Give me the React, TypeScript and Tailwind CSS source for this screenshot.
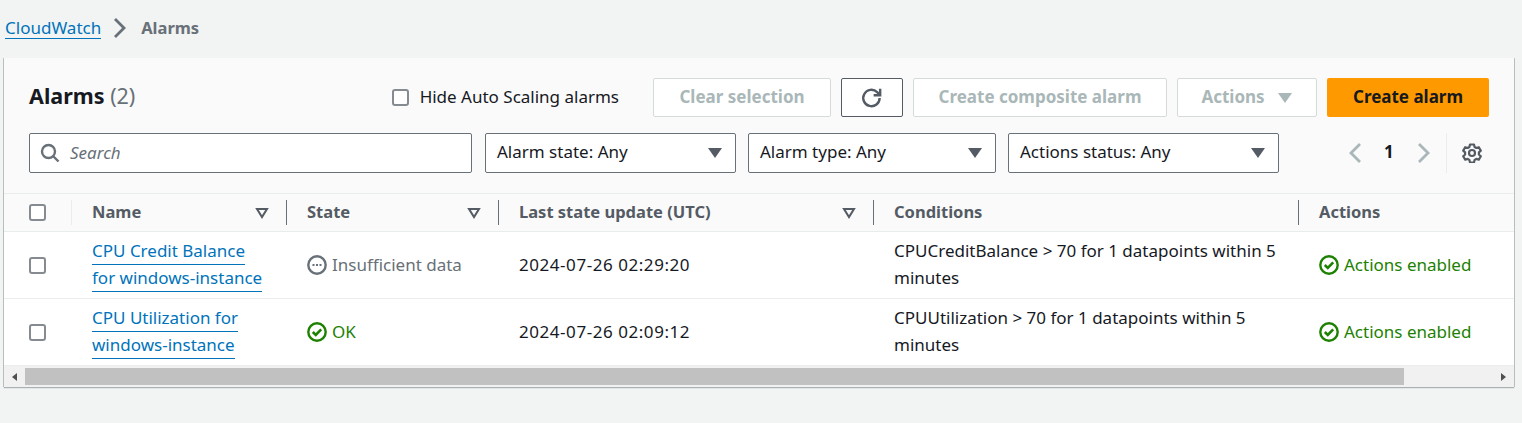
import React from "react";

const font = "font-['Noto_Sans',sans-serif]";

const Caret = ({ className = "fill-[#545b64]" }: { className?: string }) => (
  <svg width="16" height="12" viewBox="0 0 16 12" className={className}>
    <path d="M1 1h14L8 11z" />
  </svg>
);

const SortCaret = () => (
  <svg width="14" height="12" viewBox="0 0 14 12" fill="none" stroke="#545b64" strokeWidth="2">
    <path d="M2 2h10L7 10z" />
  </svg>
);

const CheckBox = () => <div className="h-[17px] w-[17px] rounded-[3px] border-2 border-[#858b91] bg-white" />;

const OkIcon = () => (
  <svg width="20" height="20" viewBox="0 0 20 20" fill="none" stroke="#1d8102" strokeWidth="2.4">
    <circle cx="10" cy="10" r="8.700" />
    <path d="M5.800 10l3 3 5.400-5.600" strokeWidth="2.600" />
  </svg>
);

const DotsIcon = () => (
  <svg width="20" height="20" viewBox="0 0 20 20" fill="none" stroke="#687078" strokeWidth="2.4">
    <circle cx="10" cy="10" r="8.700" />
    <path d="M5.500 10h2M9 10h2M12.500 10h2" strokeWidth="2.200" />
  </svg>
);

const Chevron = ({ dir, color }: { dir: "left" | "right"; color: string }) => (
  <svg width="14" height="22" viewBox="0 0 14 22" fill="none" stroke={color} strokeWidth="2.8">
    <path d={dir === "left" ? "M12 2L3 11l9 9" : "M2 2l9 9-9 9"} />
  </svg>
);

const Gear = () => (
  <svg width="20" height="20" viewBox="0 0 20 20" fill="none" stroke="#545b64" strokeWidth="2.200" strokeLinejoin="round">
    <path d="M8 1.500h4l.6 2.500 1.700 1 2.500-.8 2 3.400-1.900 1.800v2.100l1.900 1.800-2 3.400-2.500-.8-1.700 1-.6 2.600H8l-.6-2.600-1.700-1-2.500.8-2-3.400 1.900-1.800V9.400L1.200 7.600l2-3.400 2.500.8 1.700-1z" />
    <circle cx="10" cy="10" r="3" />
  </svg>
);

const FilterSelect = ({ label, width }: { label: string; width: string }) => (
  <div className={`flex h-[40px] items-center justify-between rounded-[2px] border border-[#687078] bg-white pl-[11px] pr-[12px] text-[#16191f] ${width}`}>
    <span className="-mt-[2px]">{label}</span>
    <Caret />
  </div>
);

const DisabledButton = ({ label, width, caret }: { label: string; width: string; caret?: boolean }) => (
  <div className={`flex h-[39px] items-center justify-center gap-[12px] rounded-[2px] border border-[#d5dbdb] bg-white font-bold text-[#aab7b8] ${width}`}>
    <span className="-mt-[2px]">{label}</span>
    {caret && <Caret className="fill-[#aab7b8]" />}
  </div>
);

const HeadCell = ({ label, sort, border = true }: { label: string; sort?: boolean; border?: boolean }) => (
  <div className="flex h-full items-center py-[6px]">
    <div className={`flex h-full w-full items-center justify-between pl-[20px] pr-[17px] ${border ? "border-r border-[#687078]" : ""}`}>
      <span>{label}</span>
      {sort && <SortCaret />}
    </div>
  </div>
);

const rows = [
  {
    name: ["CPU Credit Balance", "for windows-instance"],
    ok: false,
    state: "Insufficient data",
    updated: "2024-07-26 02:29:20",
    condition: "CPUCreditBalance > 70 for 1 datapoints within 5 minutes",
  },
  {
    name: ["CPU Utilization for", "windows-instance"],
    ok: true,
    state: "OK",
    updated: "2024-07-26 02:09:12",
    condition: "CPUUtilization > 70 for 1 datapoints within 5 minutes",
  },
];

const columns = "grid grid-cols-[68px_215px_212px_375px_425px_215px]";

export default function App() {
  return (
    <div className={`${font} h-[423px] w-[1522px] overflow-hidden bg-[#f2f3f3] text-[17px] text-[#16191f]`}>
      <div className="flex h-[58px] items-center pb-[2px] pl-[5px]">
        <a className="border-b border-[#0073bb] leading-[21px] text-[#0073bb]">CloudWatch</a>
        <span className="ml-[12px] mr-[14px] flex">
          <Chevron dir="right" color="#687078" />
        </span>
        <span className="text-[16.500px] font-bold text-[#687078]">Alarms</span>
      </div>

      <div className="ml-[4px] h-[329px] w-[1510px] bg-[#fafafa] shadow-[0_1px_1px_0_rgba(0,28,36,0.3),1px_0_0_0_rgba(0,28,36,0.2),-1px_0_0_0_rgba(0,28,36,0.2)]">
        <div className="flex h-[136px] flex-col border-b border-[#eaeded] pl-[25px] pr-[25px] pt-[20px]">
          <div className="flex items-center">
            <h1 className="-mt-[2px] text-[21.500px] font-bold">
              Alarms <span className="font-normal text-[#687078]">(2)</span>
            </h1>
            <label className="ml-auto mr-[34px] flex items-center gap-[11px]">
              <CheckBox />
              <span className="-mt-[2px]">Hide Auto Scaling alarms</span>
            </label>
            <div className="flex gap-[10px]">
              <DisabledButton label="Clear selection" width="w-[178px]" />
              <div className="flex h-[39px] w-[62px] items-center justify-center rounded-[2px] border border-[#545b64] bg-white">
                <svg width="24" height="24" viewBox="0 0 22 22" fill="none" stroke="#545b64" strokeWidth="2.200">
                  <path d="M18 11a7.500 7.500 0 1 1-2.300-5.400L18 8" />
                  <path d="M18.500 2.500V8.500H12.500" />
                </svg>
              </div>
              <DisabledButton label="Create composite alarm" width="w-[254px]" />
              <DisabledButton label="Actions" width="w-[140px]" caret />
              <div className="flex h-[39px] w-[162px] items-center justify-center rounded-[2px] bg-[#ff9900] font-bold">
                <span className="-mt-[2px]">Create alarm</span>
              </div>
            </div>
          </div>

          <div className="mt-[16px] flex items-center">
            <div className="flex h-[40px] w-[443px] items-center gap-[10px] rounded-[2px] border border-[#687078] bg-white pl-[10px] italic text-[#687078]">
              <svg width="20" height="20" viewBox="0 0 20 20" fill="none" stroke="#687078" strokeWidth="2.400">
                <circle cx="8.500" cy="8.500" r="6.500" />
                <path d="M13 13l5.500 5.500" />
              </svg>
              <span className="-mt-[1px]">Search</span>
            </div>
            <div className="ml-[13px] flex gap-[12px]">
              <FilterSelect label="Alarm state: Any" width="w-[251px]" />
              <FilterSelect label="Alarm type: Any" width="w-[248px]" />
              <FilterSelect label="Actions status: Any" width="w-[271px]" />
            </div>
            <div className="ml-[69px] flex items-center">
              <Chevron dir="left" color="#aab7b8" />
              <span className="-mt-[2px] ml-[22px] mr-[23px] font-bold">1</span>
              <Chevron dir="right" color="#aab7b8" />
              <div className="ml-[15px] flex h-[40px] items-center border-l border-[#eaeded] pl-[15px]">
                <Gear />
              </div>
            </div>
          </div>
        </div>

        <div className={`${columns} h-[38px] border-b border-[#eaeded] text-[16.500px] font-bold text-[#545b64]`}>
          <div className="flex items-center justify-between py-[6px] pl-[25px]">
            <CheckBox />
            <div className="h-full border-r border-[#eaeded]" />
          </div>
          <HeadCell label="Name" sort />
          <HeadCell label="State" sort />
          <HeadCell label="Last state update (UTC)" sort />
          <HeadCell label="Conditions" />
          <HeadCell label="Actions" border={false} />
        </div>

        {rows.map((row) => (
          <div key={row.updated} className={`${columns} h-[67px] border-b border-[#eaeded] bg-white leading-[27px]`}>
            <div className="flex items-center pl-[25px]">
              <CheckBox />
            </div>
            <div className="flex flex-col items-start justify-center pl-[20px] text-[#0073bb]">
              {row.name.map((line) => (
                <a key={line} className="border-b border-[#0073bb] leading-[26px]">
                  {line}
                </a>
              ))}
            </div>
            <div className={`flex items-center gap-[5px] pl-[20px] ${row.ok ? "text-[#1d8102]" : "text-[#687078]"}`}>
              {row.ok ? <OkIcon /> : <DotsIcon />}
              <span className="-mt-[1px]">{row.state}</span>
            </div>
            <div className="flex items-center pl-[20px] pb-[2px] tracking-[0.550px]">{row.updated}</div>
            <div className="flex items-center pl-[20px] pr-[16px] pb-[2px]">{row.condition}</div>
            <div className="flex items-center gap-[5px] pl-[20px] text-[#1d8102]">
              <OkIcon />
              <span className="-mt-[1px]">Actions enabled</span>
            </div>
          </div>
        ))}

        <div className="flex h-[21px] items-center justify-between bg-[#f1f1f1]">
          <div className="flex items-center">
            <div className="ml-[8px] h-0 w-0 border-y-[4px] border-r-[5px] border-y-transparent border-r-[#505050]" />
            <div className="ml-[8px] h-[17px] w-[1379px] bg-[#c1c1c1]" />
          </div>
          <div className="mr-[8px] h-0 w-0 border-y-[4px] border-l-[5px] border-y-transparent border-l-[#505050]" />
        </div>
      </div>
    </div>
  );
}
